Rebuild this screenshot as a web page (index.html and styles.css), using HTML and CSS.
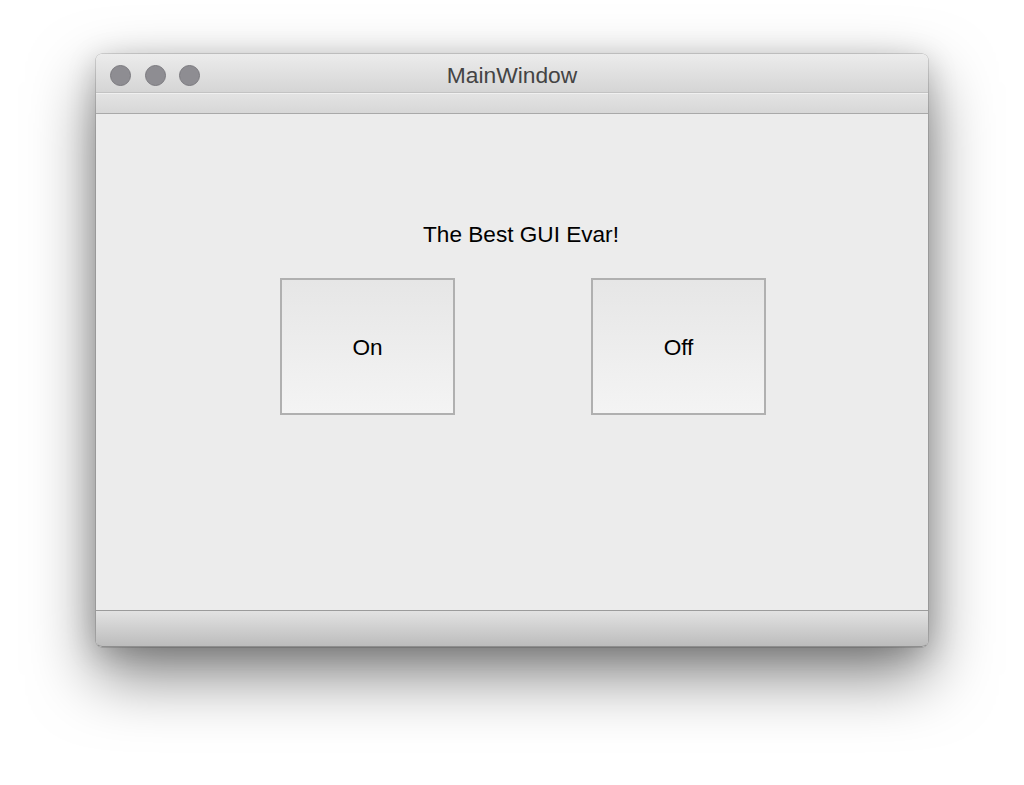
FILE: index.html
```html
<!DOCTYPE html>
<html>
<head>
<meta charset="utf-8">
<title>MainWindow</title>
<link rel="stylesheet" href="styles.css">
</head>
<body>
<div class="window">
  <div class="titlebar">
    <div class="lights">
      <span class="light"></span>
      <span class="light"></span>
      <span class="light"></span>
    </div>
    <div class="title">MainWindow</div>
    <div class="spacer"></div>
  </div>
  <div class="toolbar"></div>
  <div class="content">
    <div class="label">The Best GUI Evar!</div>
    <div class="buttons">
      <button class="btn">On</button>
      <button class="btn">Off</button>
    </div>
  </div>
  <div class="statusbar"></div>
</div>
</body>
</html>
```

FILE: styles.css
```css
html, body {
  margin: 0;
  padding: 0;
  background: #ffffff;
}

body {
  width: 1024px;
  height: 785px;
  overflow: hidden;
  font-family: "Liberation Sans", Arial, sans-serif;
}

.window {
  margin: 54px 0 0 96px;
  width: 832px;
  height: 593px;
  border-radius: 6px;
  overflow: hidden;
  display: flex;
  flex-direction: column;
  box-shadow: 0 0 0 0.5px rgba(0, 0, 0, 0.25), 0 28px 65px rgba(0, 0, 0, 0.5), 0 6px 30px rgba(0, 0, 0, 0.18);
}

.titlebar {
  height: 34px;
  padding-top: 4px;
  border-bottom: 1px solid #c3c3c3;
  background: linear-gradient(#ececec, #d5d5d5);
  display: grid;
  grid-template-columns: 1fr auto 1fr;
  align-items: center;
}

.lights {
  display: flex;
  gap: 13.5px;
  padding-left: 14px;
}

.light {
  width: 19px;
  height: 19px;
  border-radius: 50%;
  background: #8e8d92;
  border: 1px solid #7b7a7f;
}

.title {
  font-size: 22.8px;
  color: #444444;
}

.toolbar {
  height: 19px;
  border-top: 1px solid #f0f0f0;
  border-bottom: 1px solid #a9a9a9;
  background: linear-gradient(#e3e3e3, #d7d7d7);
}

.content {
  height: 496px;
  background: #ececec;
  display: flex;
  flex-direction: column;
  padding-top: 107px;
  box-sizing: border-box;
}

.label {
  font-size: 22.6px;
  line-height: 28px;
  color: #000000;
  text-align: center;
  padding-left: 18px;
}

.buttons {
  margin-top: 29px;
  display: flex;
  gap: 136px;
  padding-left: 184px;
}

.btn {
  width: 175px;
  height: 137px;
  box-sizing: border-box;
  border: 2px solid #b0b0b0;
  background: linear-gradient(#e6e6e6, #f4f4f4);
  font-family: "Liberation Sans", Arial, sans-serif;
  font-size: 22.6px;
  color: #000000;
  padding: 3px 0 0 0;
  margin: 0;
}

.statusbar {
  flex: 1;
  border-top: 1px solid #9b9b9b;
  background: linear-gradient(#e2e2e2, #bcbcbc);
  border-bottom: 1px solid #8e8e8e;
  border-radius: 0 0 6px 6px;
}
```
